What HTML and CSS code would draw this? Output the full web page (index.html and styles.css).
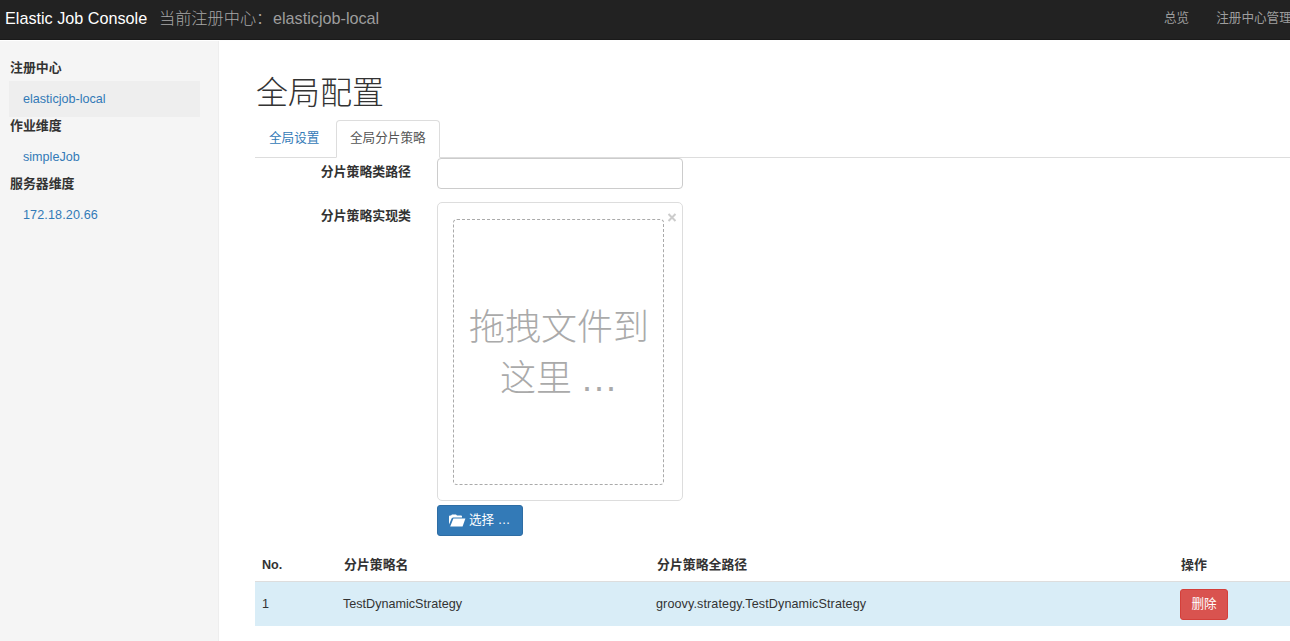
FILE: index.html
```html
<!DOCTYPE html>
<html lang="zh-CN">
<head>
<meta charset="utf-8">
<title>Elastic Job Console</title>
<link rel="stylesheet" href="styles.css">
</head>
<body>
<header class="navbar">
  <a class="brand">Elastic Job Console</a>
  <div class="registry"><span class="registry-label">当前注册中心：</span><span>elasticjob-local</span></div>
  <nav class="nav-links"><a>总览</a><a class="nav-registry">注册中心管理</a></nav>
</header>
<div class="layout">
  <aside class="sidebar">
    <strong>注册中心</strong>
    <a class="active">elasticjob-local</a>
    <strong>作业维度</strong>
    <a>simpleJob</a>
    <strong>服务器维度</strong>
    <a class="server">172.18.20.66</a>
  </aside>
  <main class="main">
    <h1>全局配置</h1>
    <div class="tabs"><a class="tab">全局设置</a><a class="tab selected">全局分片策略</a></div>
    <form class="form">
      <div class="field"><label>分片策略类路径</label><input class="path-input" type="text"></div>
      <div class="field upload-field">
        <label>分片策略实现类</label>
        <div class="upload">
          <div class="preview">
            <svg class="close" viewBox="0 0 9 9"><path d="M1 1l7 7M8 1l-7 7"/></svg>
            <div class="dropzone"><span>拖拽文件到</span><span>这里 <span class="dots">...</span></span></div>
          </div>
          <div class="choose">
            <svg class="folder" viewBox="0 0 18 13"><path d="M1 10.5V2.5Q1 1.5 2 1.5H3L4 .5H8L9 1.5H13Q14 1.5 14 2.5V3.5H5L3.7 4.2L1 10.5Z"/><path d="M5.4 4.5H17.4L14.6 12.5H2.2Z"/></svg>
            <span>选择 …</span>
          </div>
        </div>
      </div>
    </form>
    <div class="table">
      <div class="row head"><b>No.</b><b>分片策略名</b><b>分片策略全路径</b><b>操作</b></div>
      <div class="row item"><span>1</span><span>TestDynamicStrategy</span><span class="class-path">groovy.strategy.TestDynamicStrategy</span><span class="action"><a class="delete">删除</a></span></div>
    </div>
  </main>
</div>
</body>
</html>
```
FILE: styles.css
```css
* { box-sizing: border-box; }
body { margin: 0; width: 1290px; height: 641px; overflow: hidden; background: #fff; color: #333; font: 12.6px/18px "Liberation Sans", "Noto Sans CJK SC", sans-serif; }
.navbar { display: flex; align-items: center; height: 40px; padding: 0 0 3px 5px; background: #222; border-bottom: 1px solid #1a1a1a; color: #9d9d9d; font-size: 16.2px; white-space: nowrap; }
.brand { width: 154px; color: #fff; }
.registry { display: flex; font-weight: 300; }
.registry-label { width: 114px; color: #a8a8a8; }
.nav-links { display: flex; margin-left: auto; width: 126px; gap: 27px; font-size: 12.6px; padding-bottom: 1px; }
.layout { display: flex; height: 600px; margin-top: 1px; }
.sidebar { flex: none; width: 219px; padding: 18px 18px 0 9px; background: #f5f5f5; border-right: 1px solid #eee; }
.sidebar strong { display: block; height: 22px; line-height: 17px; font-size: 12.9px; padding-left: 1px; }
.sidebar a { display: block; height: 36px; line-height: 36px; padding-left: 14px; color: #337ab7; }
.sidebar .active { background: #eee; }
.sidebar .server { letter-spacing: .12px; }
.main { flex: 1; min-width: 0; padding: 33px 0 0 36px; }
h1 { margin: 0; height: 46px; padding-left: 1px; font-size: 32px; line-height: 38px; font-weight: 300; }
.tabs { display: flex; height: 38px; border-bottom: 1px solid #ddd; }
.tab { height: 38px; padding: 9px 14px; border: 1px solid transparent; line-height: 17px; color: #337ab7; }
.tab:first-child { width: 81px; padding-left: 13px; }
.tab.selected { width: 104px; padding-left: 13px; padding-right: 0; color: #555; background: #fff; border-color: #ddd #ddd #fff; border-radius: 4px 4px 0 0; }
.field { display: grid; grid-template-columns: 156px 246px; column-gap: 26px; height: 44px; }
.field label { padding-top: 5px; text-align: right; font-size: 12.9px; font-weight: bold; }
.path-input { height: 31px; border: 1px solid #ccc; border-radius: 4px; outline: none; }
.upload-field { height: 347px; }
.preview { position: relative; height: 299px; padding: 16px 18px 15px 15px; border: 1px solid #ddd; border-radius: 5px; }
.dropzone { display: flex; flex-direction: column; align-items: center; justify-content: center; height: 266px; padding: 2px 0 0 1px; border: 1px dashed #aaa; border-radius: 4px; color: #aaa; font-size: 36px; font-weight: 300; line-height: 51px; white-space: pre; }
.dots { letter-spacing: 2px; }
.close { position: absolute; top: 10px; right: 5px; width: 10px; height: 9px; stroke: #ccc; stroke-width: 2; fill: none; }
.choose { display: flex; width: 86px; height: 31px; margin-top: 4px; padding: 0 0 2px 10px; align-items: center; gap: 3px; background: #337ab7; border: 1px solid #2e6da4; border-radius: 3px; color: #fff; white-space: nowrap; }
.folder { width: 18px; height: 13px; fill: #fff; margin-top: 2px; }
.row { display: grid; grid-template-columns: 81px 313px 524px 1fr; padding-left: 7px; align-items: center; }
.head { height: 33px; border-bottom: 1px solid #ddd; font-size: 12.9px; }
.head b + b { padding-left: 1px; }
.head b:first-child { font-size: 12.6px; }
.item { height: 44px; background: #d9edf7; }
.item .class-path { letter-spacing: .1px; }
.delete { display: block; width: 48px; height: 31px; border: 1px solid #d43f3a; border-radius: 3px; background: #d9534f; color: #fff; text-align: center; line-height: 28px; }
```
